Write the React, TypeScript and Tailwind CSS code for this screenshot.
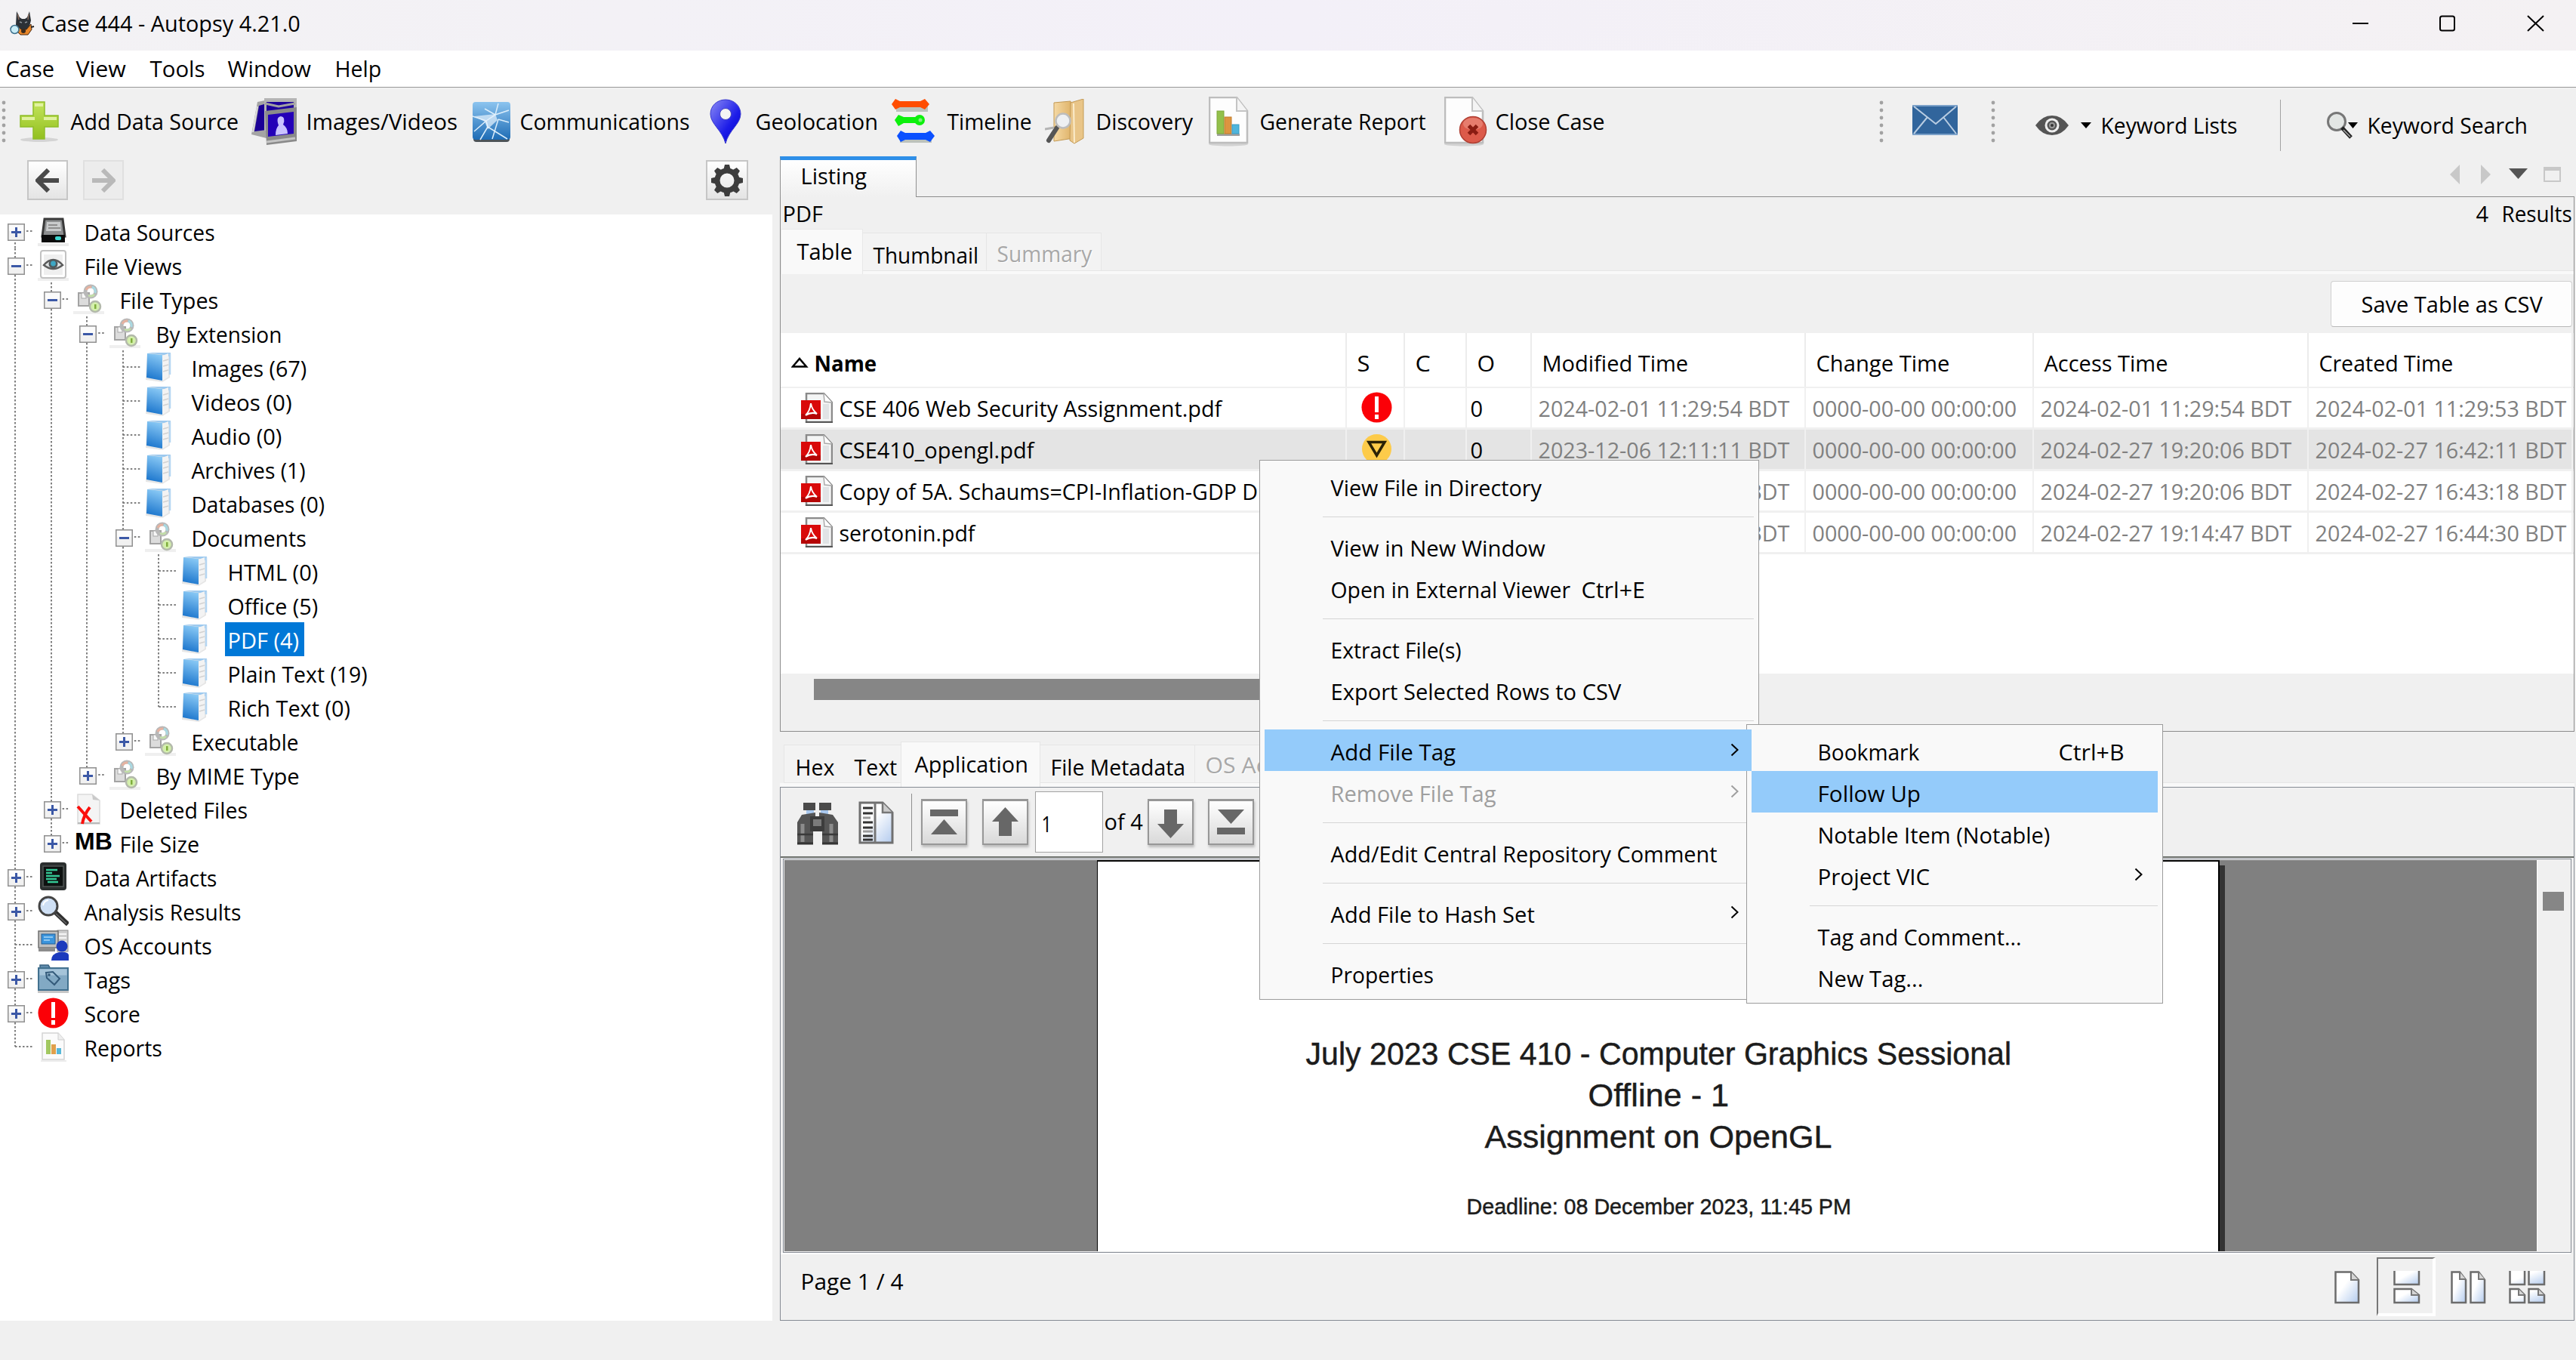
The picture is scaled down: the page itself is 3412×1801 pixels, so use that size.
import { useLayoutEffect, useRef, useState, type ReactNode } from "react";

/* One-line label whose glyphs are fitted horizontally to a fixed ink width. */
function T({ w, children, className = "" }: { w: number; children: ReactNode; className?: string }) {
  const ref = useRef<HTMLSpanElement>(null);
  const [k, setK] = useState(1);
  useLayoutEffect(() => {
    if (ref.current) setK((w + 2) / ref.current.offsetWidth);
  }, [w]);
  return (
    <span className={`block h-10 shrink-0 whitespace-pre leading-10 ${className}`} style={{ width: w }}>
      <span ref={ref} className="inline-block origin-left" style={{ transform: `translateX(-0.5px) scaleX(${k})` }}>
        {children}
      </span>
    </span>
  );
}

/* ---------- toolbar icons ---------- */

function DogIcon() {
  return (
    <svg width="34" height="32" viewBox="0 0 34 32">
      <path d="M9 0 L13 8 L16 10 L20 10 L23 8 L26 0 L28 12 L26 20 L21 25 L13 24 L8 18 Z" fill="#2b3036" />
      <path d="M10.500 4 L12 11 M25 4 L24 11" stroke="#8a6f60" strokeWidth="1.5" />
      <path d="M13 14 L16 15 M20 15 L23 14" stroke="#8d959c" strokeWidth="1.500" />
      <path d="M10 19 L15 24 L22 24 L28 17 L29 24 L24 31 L14 31 L9 26 Z" fill="#e8862a" stroke="#4a2a12" strokeWidth="1" />
      <circle cx="18" cy="26" r="3" fill="#3a2a1c" />
      <circle cx="6.500" cy="24" r="5.500" fill="#c8ecf7" stroke="#3b6f8c" strokeWidth="1.5" />
      <path d="M28 21 L32 20" stroke="#222" strokeWidth="2" />
    </svg>
  );
}

function PlusIcon() {
  return (
    <svg width="52" height="56" viewBox="0 0 52 56">
      <defs>
        <linearGradient id="gPlus" x1="0" y1="0" x2="0" y2="1">
          <stop offset="0" stopColor="#c3e45c" />
          <stop offset="1" stopColor="#93c01f" />
        </linearGradient>
      </defs>
      <ellipse cx="26" cy="52" rx="25" ry="3" fill="#d4d4d4" />
      <path d="M18 2 H33 V20 H51 V35 H33 V51 H18 V35 H1 V20 H18 Z" fill="url(#gPlus)" stroke="#8fbd2a" strokeWidth="1.5" />
      <path d="M20 4 H31 V8 H20 Z M3 22 H20 V26 H3 Z M32 22 H49 V26 H32 Z" fill="#e0f2a0" />
    </svg>
  );
}

function ImagesIcon() {
  return (
    <svg width="62" height="64" viewBox="0 0 62 64">
      <path d="M8 6 L28 2 L34 44 L20 54 L0 49 Z" fill="#a4a4a4" />
      <path d="M10 11 L27 6 L28 42 L4 45 Z" fill="#1b0096" />
      <path d="M8 12 L2 46" stroke="#dcdcdc" strokeWidth="2" />
      <path d="M17 1 H60 V44 H17 Z" fill="#b4b4b4" />
      <path d="M20 6 H56 V40 H20 Z" fill="#1d009c" />
      <path d="M18 8 L36 12 L58 8" fill="none" stroke="#a2a2a2" strokeWidth="3" />
      <path d="M18 18 L60 13 V58 L20 63 Z" fill="#8a8a8a" />
      <path d="M22 23 L56 19 V48 L22 52 Z" fill="#2400b8" />
      <path d="M32 50 Q32 41 36 37 Q32 26 39 25 Q46 26 42 36 Q48 40 48 48 Z" fill="#c9c2ff" />
      <path d="M20 59 L58 54" stroke="#c4c4c4" strokeWidth="3" />
    </svg>
  );
}

function CommIcon() {
  return (
    <svg width="50" height="54" viewBox="0 0 50 54">
      <defs>
        <linearGradient id="gComm" x1="0" y1="0" x2="0" y2="1">
          <stop offset="0" stopColor="#8cc4ef" />
          <stop offset="1" stopColor="#1e6cb5" />
        </linearGradient>
      </defs>
      <rect x="1" y="5" width="48" height="49" rx="4" fill="#4c5358" />
      <rect x="0" y="1" width="50" height="50" rx="4" fill="url(#gComm)" />
      <path d="M0 20 L18 26 L2 40 M18 26 L30 18 L48 12 M18 26 L20 34 L46 50 M20 34 L10 51 M34 3 L30 18 L16 10 M34 24 L26 50 M34 24 L48 28" fill="none" stroke="#dceefb" strokeWidth="1.500" />
      <path d="M2 20 L30 17 L33 25 L20 37 L16 27 Z" fill="#e8f4fd" opacity=".7" />
    </svg>
  );
}

function PinIcon() {
  return (
    <svg width="42" height="60" viewBox="0 0 42 60">
      <defs>
        <linearGradient id="gPin" x1="0" y1="0" x2="1" y2="1">
          <stop offset="0" stopColor="#8b8bf5" />
          <stop offset=".6" stopColor="#1c1ce8" />
          <stop offset="1" stopColor="#0000c8" />
        </linearGradient>
      </defs>
      <path d="M21 1 C32 1 41 9 41 20 C41 33 25 42 21 59 C17 42 1 33 1 20 C1 9 10 1 21 1 Z" fill="url(#gPin)" stroke="#3a3ad0" strokeWidth="1" />
      <circle cx="21" cy="20" r="7.5" fill="#f4f4f4" stroke="#4444c0" strokeWidth="1" />
    </svg>
  );
}

function TimelineIcon() {
  return (
    <svg width="60" height="62" viewBox="0 0 60 62">
      <g fill="#9aa49a" opacity=".6" transform="translate(1 4)">
        <rect x="5" y="5" width="42" height="9" />
        <rect x="10" y="46" width="42" height="9" />
      </g>
      <g fill="#ff4d00">
        <rect x="5" y="4" width="40" height="8" />
        <path d="M0 8 L5 1 L11 4 V12 L5 15 Z M50 8 L44 1 L38 4 V12 L44 15 Z" />
      </g>
      <g fill="#0cf00c">
        <rect x="8" y="25" width="32" height="8" />
        <path d="M4 29 L9 22 L16 25 V33 L9 37 Z" />
        <circle cx="37" cy="29" r="7" />
        <circle cx="38" cy="29" r="2.5" fill="#7df07d" />
      </g>
      <g fill="#0b50ff">
        <rect x="12" y="46" width="40" height="9" />
        <path d="M7 50 L12 43 L18 46 V55 L12 58 Z M57 50 L51 43 L45 46 V55 L51 58 Z" />
      </g>
    </svg>
  );
}

function DiscoveryIcon() {
  return (
    <svg width="52" height="60" viewBox="0 0 52 60">
      <defs>
        <linearGradient id="gFold" x1="0" y1="0" x2="1" y2="0">
          <stop offset="0" stopColor="#f5d9a4" />
          <stop offset="1" stopColor="#dcae62" />
        </linearGradient>
      </defs>
      <path d="M12 5 L34 3 L38 52 L12 56 Z" fill="url(#gFold)" stroke="#c39a55" strokeWidth="1" />
      <path d="M34 5 L51 0 V52 L39 59 L33 55 Z" fill="#e9c588" stroke="#c39a55" strokeWidth="1" />
      <path d="M38 6 L39 58" stroke="#fbeccb" strokeWidth="2" />
      <path d="M16 38 L5 55" stroke="#555" strokeWidth="6" strokeLinecap="round" />
      <path d="M12 38 L0 40" stroke="#b4b4b4" strokeWidth="3" />
      <circle cx="24" cy="29" r="9.500" fill="#eef0f2" stroke="#bdbdbd" strokeWidth="2.5" />
    </svg>
  );
}

function SheetPath() {
  return (
    <>
      <ellipse cx="26" cy="63" rx="26" ry="2.5" fill="#d2d2d2" />
      <path d="M1 1 H37 L51 19 V61 H1 Z" fill="#fdfdfd" stroke="#bdbdbd" strokeWidth="2.5" />
      <path d="M37 1 V19 H51" fill="#f4f4f4" stroke="#c4c4c4" strokeWidth="2" />
    </>
  );
}

function ReportIcon() {
  return (
    <svg width="54" height="66" viewBox="0 0 54 66">
      <SheetPath />
      <rect x="11" y="49" width="30" height="3" fill="#a0a0a0" />
      <rect x="11" y="19" width="9" height="30" fill="#93c04a" stroke="#7fa93a" />
      <rect x="21" y="27" width="9" height="22" fill="#dd9440" stroke="#c27c28" />
      <rect x="31" y="37" width="9" height="12" fill="#4fb5dc" stroke="#3a9cc4" />
    </svg>
  );
}

function CloseCaseIcon() {
  return (
    <svg width="58" height="66" viewBox="0 0 58 66">
      <SheetPath />
      <circle cx="38" cy="44" r="17.5" fill="#dc5a4a" stroke="#b04034" strokeWidth="1.5" />
      <ellipse cx="38" cy="36" rx="13" ry="8" fill="#ea8a7c" opacity=".7" />
      <path d="M32.5 38.5 L43.5 49.5 M43.5 38.5 L32.5 49.5" stroke="#8a1c12" strokeWidth="5" />
    </svg>
  );
}

function MailIcon() {
  return (
    <svg width="60" height="40" viewBox="0 0 60 40">
      <rect width="60" height="40" fill="#31659c" />
      <rect width="60" height="2" fill="#7ba0c8" />
      <rect y="38" width="60" height="2" fill="#7ba0c8" />
      <path d="M2 2 L31 25 L58 2 M2 38 L20 16 M58 38 L41 16" fill="none" stroke="#b9cde2" strokeWidth="2" />
    </svg>
  );
}

function EyeIcon() {
  return (
    <svg width="46" height="26" viewBox="0 0 46 26">
      <path d="M0 13 Q9 0 22 0 Q35 0 44 13 Q35 26 22 26 Q9 26 0 13 Z" fill="#555" />
      <circle cx="22" cy="13" r="9.500" fill="#efefef" />
      <circle cx="22" cy="13" r="6.500" fill="#555" />
      <circle cx="22" cy="13" r="4" fill="#9a9a9a" />
      <circle cx="22" cy="13" r="2" fill="#333" />
    </svg>
  );
}

function SmallCaret() {
  return (
    <svg width="14" height="8" viewBox="0 0 14 8">
      <path d="M0 0 H14 L7 8 Z" fill="#000" />
    </svg>
  );
}

function KeywordSearchIcon() {
  return (
    <svg width="42" height="38" viewBox="0 0 42 38">
      <circle cx="13" cy="14" r="11.5" fill="#e3e6e4" stroke="#777" strokeWidth="3" />
      <path d="M20 22 L32 35" stroke="#222" strokeWidth="5" />
      <path d="M22 25 L31 34" stroke="#aaa" strokeWidth="1.5" />
      <path d="M28 15 H41 L34.500 23 Z" fill="#000" />
    </svg>
  );
}

function Grip() {
  return (
    <svg width="6" height="56" viewBox="0 0 6 56">
      {[0, 1, 2, 3, 4, 5].map((i) => (
        <circle key={i} cx="3" cy={3 + i * 10} r="2.4" fill="#a2a2a2" />
      ))}
    </svg>
  );
}

/* ---------- tree icons (41 x 41) ---------- */

type IconName =
  | "disk" | "eye" | "types" | "folder" | "deleted" | "mb" | "artifacts"
  | "magnifier" | "accounts" | "tags" | "score" | "reports";

function ScoreGlyph() {
  return (
    <>
      <circle cx="20.500" cy="20.500" r="20" fill="#fb0007" />
      <path d="M20.500 6 V27 M20.500 30 V36" stroke="#fff" strokeWidth="5" />
    </>
  );
}

function TreeIcon({ name }: { name: IconName }) {
  if (name === "mb") {
    return <span className="block h-[41px] w-[52px] pl-[2px] font-['Liberation_Sans'] text-[32px] font-bold leading-[36px]">MB</span>;
  }
  return (
    <svg width="41" height="41" viewBox="0 0 41 41">
      {name === "disk" && (
        <>
          <rect x="0" y="36" width="41" height="4" fill="#ececec" />
          <path d="M9 4 H33 L36 27 H6 Z" fill="#8d8f90" stroke="#3a3a3a" strokeWidth="3" />
          <path d="M12 8 H30 L31 20 H11 Z" fill="#c9cbcc" />
          <path d="M14 12 H26 M14 16 H30" stroke="#8e8e8e" strokeWidth="2" />
          <rect x="5" y="25" width="31" height="10" fill="#0b0b0b" />
          <rect x="23" y="27" width="8" height="5" rx="2" fill="#3fd6d0" />
        </>
      )}
      {name === "eye" && (
        <>
          <rect x="0" y="37" width="41" height="4" fill="#efefef" />
          <rect x="4" y="1" width="33" height="36" rx="3" fill="#fff" stroke="#c2c2c2" strokeWidth="2" />
          <rect x="8" y="6" width="25" height="27" fill="#efefef" />
          <path d="M8 20 Q20.500 6 33 20 Q20.500 30 8 20 Z" fill="#dfe3e4" stroke="#5c5c5c" strokeWidth="2.5" />
          <circle cx="20.500" cy="18.500" r="6" fill="#50595c" />
          <circle cx="20.500" cy="18" r="3.4" fill="#3da7c4" />
        </>
      )}
      {name === "types" && (
        <>
          <rect x="0" y="36" width="41" height="4" fill="#efefef" />
          <rect x="7" y="12" width="14" height="17" fill="#dcdcdc" stroke="#a3a3a3" strokeWidth="2" />
          <rect x="11" y="12" width="6" height="7" fill="#f8f8f8" stroke="#a8a8a8" />
          <circle cx="23" cy="10" r="7" fill="none" stroke="#b8b8b8" strokeWidth="5" />
          <path d="M17 8 A6.500 6.500 0 0 1 24 4" fill="none" stroke="#e6b2a0" strokeWidth="3" />
          <path d="M25 4 A6.500 6.500 0 0 1 29 12" fill="none" stroke="#a9d9e2" strokeWidth="3" />
          <path d="M28 14 A6.500 6.500 0 0 1 20 15" fill="none" stroke="#c2dfa8" strokeWidth="2.500" />
          <circle cx="29" cy="30" r="7" fill="#d3efab" stroke="#b3b9ab" strokeWidth="2.5" />
          <rect x="28" y="27" width="2.500" height="6" fill="#7fae3c" />
        </>
      )}
      {name === "folder" && (
        <>
          <path d="M3 2 L34 1 L33 34 L23 40 L1 37 Z" fill="#e6e6e6" />
          <path d="M3 1 L34 1 L32 6 L24 4 Z" fill="#9cc9ef" />
          <path d="M23 5 L31 2 V33 L22 39 Z" fill="#f3f3f3" />
          <path d="M24 12 L31 10 M24 19 L31 17 M24 26 L31 24" stroke="#d2d2d2" strokeWidth="1.500" />
          <path d="M33 2 V30" stroke="#b5d6f2" strokeWidth="2.500" />
          <linearGradient id="gFolder" x1="0.700" y1="0" x2="0.500" y2="1">
            <stop offset="0" stopColor="#8ccbf6" />
            <stop offset="1" stopColor="#1c76cd" />
          </linearGradient>
          <path d="M3 2 L23 4 V38 L2 34 Z" fill="url(#gFolder)" />
        </>
      )}
      {name === "deleted" && (
        <>
          <path d="M6 1 H25 L35 9 V40 H6 Z" fill="#f4f4f4" stroke="#dadada" strokeWidth="1.500" />
          <path d="M25 1 L26 8 L35 9 Z" fill="#c9c9c9" />
          <rect x="6" y="38" width="29" height="2" fill="#b9b9b9" />
          <path d="M6 17 Q14 26 24 37" fill="none" stroke="#fb0f0c" strokeWidth="4" />
          <path d="M22 18 Q14 28 12 40" fill="none" stroke="#fb0f0c" strokeWidth="4" />
        </>
      )}
      {name === "artifacts" && (
        <>
          <rect x="3" y="1" width="35" height="37" rx="4" fill="#2b2f2f" />
          <rect x="7" y="6" width="27" height="27" fill="#0d1110" stroke="#505654" strokeWidth="1.500" />
          <path d="M11 11 H26 M11 15 H19 M11 19 H29 M11 23 H25 M13 27 H27" stroke="#34c794" strokeWidth="2.500" />
        </>
      )}
      {name === "magnifier" && (
        <>
          <path d="M22 21 L40 38" stroke="#2f2f2f" strokeWidth="6" />
          <path d="M24 24 L38 37" stroke="#6a6a6a" strokeWidth="1.500" />
          <circle cx="14" cy="14" r="12" fill="#cfe0f5" stroke="#444" strokeWidth="3" />
          <path d="M7 13 Q8 7 14 6" fill="none" stroke="#fff" strokeWidth="2" />
        </>
      )}
      {name === "accounts" && (
        <>
          <rect x="26" y="1" width="14" height="28" fill="#cfcfcf" stroke="#8e8e8e" />
          <path d="M28 6 H38 M28 11 H38 M28 16 H38" stroke="#f6f6f6" strokeWidth="2" />
          <rect x="1" y="2" width="26" height="22" fill="#c0c0c0" stroke="#6f6f6f" strokeWidth="1.500" />
          <rect x="5" y="6" width="18" height="13" fill="#3b95dd" stroke="#245f96" />
          <path d="M8 10 H20 M8 14 H16" stroke="#8dc7f2" strokeWidth="2" />
          <rect x="1" y="25" width="22" height="4" fill="#8c8c8c" />
          <circle cx="32" cy="22" r="7.500" fill="#1c3bbd" />
          <path d="M18 41 Q18 32 28 30 H36 Q41 31 41 34 V41 Z" fill="#1c3bbd" />
        </>
      )}
      {name === "tags" && (
        <>
          <rect x="0" y="36" width="41" height="3" fill="#c6c6c6" />
          <path d="M3 7 V2 H14 L17 7 Z" fill="#5f8bac" stroke="#3b6483" strokeWidth="1.500" />
          <rect x="1" y="6" width="39" height="29" fill="#82a9c4" stroke="#42718f" strokeWidth="2" />
          <rect x="2.500" y="7.500" width="36" height="8" fill="#a5c4d9" />
          <path d="M11 12 L20 11 L29 20 L22 28 L12 19 Z" fill="none" stroke="#335a7a" strokeWidth="2" />
          <circle cx="15" cy="15" r="1.800" fill="#335a7a" />
        </>
      )}
      {name === "score" && <ScoreGlyph />}
      {name === "reports" && (
        <>
          <rect x="4" y="38" width="34" height="2" fill="#ececec" />
          <path d="M6 2 H27 L35 11 V37 H6 Z" fill="#fbfbfb" stroke="#d4d4d4" strokeWidth="1.500" />
          <path d="M27 2 V11 H35" fill="#eee" stroke="#cfcfcf" />
          <rect x="11" y="11" width="6" height="19" fill="#a2c861" />
          <rect x="18" y="17" width="6" height="13" fill="#e0a04b" />
          <rect x="25" y="22" width="6" height="8" fill="#57b8d8" />
        </>
      )}
    </svg>
  );
}

/* ---------- file tree ---------- */

type Node = { label: string; w: number; level: number; icon: IconName; box?: "+" | "-"; selected?: boolean };

const nodes: Node[] = [
  { label: "Data Sources", w: 171, level: 0, icon: "disk", box: "+" },
  { label: "File Views", w: 128, level: 0, icon: "eye", box: "-" },
  { label: "File Types", w: 129, level: 1, icon: "types", box: "-" },
  { label: "By Extension", w: 165, level: 2, icon: "types", box: "-" },
  { label: "Images (67)", w: 151, level: 3, icon: "folder" },
  { label: "Videos (0)", w: 131, level: 3, icon: "folder" },
  { label: "Audio (0)", w: 118, level: 3, icon: "folder" },
  { label: "Archives (1)", w: 149, level: 3, icon: "folder" },
  { label: "Databases (0)", w: 175, level: 3, icon: "folder" },
  { label: "Documents", w: 150, level: 3, icon: "types", box: "-" },
  { label: "HTML (0)", w: 118, level: 4, icon: "folder" },
  { label: "Office (5)", w: 118, level: 4, icon: "folder" },
  { label: "PDF (4)", w: 93, level: 4, icon: "folder", selected: true },
  { label: "Plain Text (19)", w: 183, level: 4, icon: "folder" },
  { label: "Rich Text (0)", w: 160, level: 4, icon: "folder" },
  { label: "Executable", w: 140, level: 3, icon: "types", box: "+" },
  { label: "By MIME Type", w: 188, level: 2, icon: "types", box: "+" },
  { label: "Deleted Files", w: 168, level: 1, icon: "deleted", box: "+" },
  { label: "File Size", w: 104, level: 1, icon: "mb", box: "+" },
  { label: "Data Artifacts", w: 174, level: 0, icon: "artifacts", box: "+" },
  { label: "Analysis Results", w: 206, level: 0, icon: "magnifier", box: "+" },
  { label: "OS Accounts", w: 167, level: 0, icon: "accounts" },
  { label: "Tags", w: 60, level: 0, icon: "tags", box: "+" },
  { label: "Score", w: 72, level: 0, icon: "score", box: "+" },
  { label: "Reports", w: 101, level: 0, icon: "reports" },
];

/* first and last row that each guide line touches */
const guides = [
  [0, 24],
  [2, 18],
  [3, 16],
  [4, 15],
  [10, 14],
];

const guttersByLevel = ["w-[50px]", "w-[97px]", "w-[145px]", "w-[192px]", "w-[240px]"];

function TreeRow({ node, row }: { node: Node; row: number }) {
  const x = 20 + node.level * 47.6;
  return (
    <div className="flex h-[45px] items-center">
      <div className={`h-[45px] shrink-0 ${guttersByLevel[node.level]}`}>
        <svg width="100%" height="45">
          {guides.map(([a, b], c) => {
            if (row < a || row > b) return null;
            const gx = Math.round(20 + c * 47.6);
            return (
              <line key={c} x1={gx} x2={gx} y1={row === 0 ? 22 : 0} y2={row === b ? 22 : 45}
                stroke="#808080" strokeWidth="2" strokeDasharray="2.500 2.500" />
            );
          })}
          <line x1={x} x2={x + 25} y1="22" y2="22" stroke="#808080" strokeWidth="2" strokeDasharray="2.500 2.500" />
          {node.box && (
            <g transform={`translate(${Math.round(x) - 10} 12)`}>
              <rect x=".75" y=".75" width="21.500" height="21.500" fill="#f1f1f1" stroke="#919191" strokeWidth="1.500" />
              <rect x="2" y="2" width="19" height="8" fill="#fbfbfb" />
              <path d={node.box === "+" ? "M5 11.500 H18 M11.500 5 V18" : "M5 11.500 H18"} stroke="#3b58a6" strokeWidth="3" />
            </g>
          )}
        </svg>
      </div>
      <div className="w-[58px] shrink-0">
        <TreeIcon name={node.icon} />
      </div>
      <div className={node.selected ? "flex h-[45px] w-[105px] items-center bg-[#0078d7] pl-1 pt-0.5 text-white" : "flex h-[45px] items-center pl-1 pt-0.5"}>
        <T w={node.w}>{node.label}</T>
      </div>
    </div>
  );
}

/* ---------- results table ---------- */

const cols = "grid grid-cols-[750px_77px_82px_86px_363px_302px_364px_350px]";

const files = [
  { name: "CSE 406 Web Security Assignment.pdf", w: 505, score: "red", o: "0", m: "2024-02-01 11:29:54 BDT", a: "2024-02-01 11:29:54 BDT", c: "2024-02-01 11:29:53 BDT" },
  { name: "CSE410_opengl.pdf", w: 256, score: "yellow", o: "0", m: "2023-12-06 12:11:11 BDT", a: "2024-02-27 19:20:06 BDT", c: "2024-02-27 16:42:11 BDT" },
  { name: "Copy of 5A. Schaums=CPI-Inflation-GDP D", w: 553, score: "", o: "", m: "2024-02-27 19:20:06 BDT", a: "2024-02-27 19:20:06 BDT", c: "2024-02-27 16:43:18 BDT" },
  { name: "serotonin.pdf", w: 178, score: "", o: "", m: "2024-02-27 19:14:47 BDT", a: "2024-02-27 19:14:47 BDT", c: "2024-02-27 16:44:30 BDT" },
];

function PdfIcon() {
  return (
    <svg width="42" height="40" viewBox="0 0 42 40">
      <path d="M7 1 H30 L41 13 V39 H7 Z" fill="#f4f5f5" stroke="#8a8a8a" strokeWidth="2.500" />
      <path d="M30 1 L31 12 L41 13" fill="#fff" stroke="#aaa" strokeWidth="1.500" />
      <rect x="29" y="15" width="8" height="20" fill="#e1e4e6" />
      <path d="M6 39 H42" stroke="#555" strokeWidth="2" />
      <rect x="0" y="10" width="26" height="25" fill="#d90a0a" />
      <rect x="0" y="28" width="26" height="7" fill="#b50505" />
      <path d="M13 14 Q14 22 21 28 Q14 25 6 30 Q12 24 13 14 Z" fill="none" stroke="#fff" strokeWidth="2" />
    </svg>
  );
}

function ScoreIcon({ kind }: { kind: string }) {
  if (kind === "red") {
    return <svg width="41" height="41"><ScoreGlyph /></svg>;
  }
  if (kind === "yellow") {
    return (
      <svg width="41" height="41" viewBox="0 0 41 41">
        <circle cx="20.500" cy="20.500" r="19.500" fill="#fdcb4a" />
        <path d="M10 11.500 H31 L20.500 29 Z" fill="none" stroke="#2a2206" strokeWidth="3.500" />
      </svg>
    );
  }
  return null;
}

function ResultsTable() {
  return (
    <div className="h-[451px] bg-white">
      <div className={`${cols} h-[73px] border-b-2 border-[#f0f0f0] [&>div]:flex [&>div]:h-[71px] [&>div]:items-center [&>div]:border-r-2 [&>div]:border-[#ececec] [&>div]:pl-[14px] [&>div]:pt-[9px]`}>
        <div>
          <svg className="-mt-[3px]" width="31" height="14" viewBox="0 0 31 14">
            <path d="M2 12.500 L11 2 L20 12.500 Z" fill="none" stroke="#000" strokeWidth="2.500" />
          </svg>
          <T w={81} className="font-bold">Name</T>
        </div>
        <div><T w={15}>S</T></div>
        <div><T w={18}>C</T></div>
        <div><T w={22}>O</T></div>
        <div><T w={192}>Modified Time</T></div>
        <div><T w={175}>Change Time</T></div>
        <div><T w={162}>Access Time</T></div>
        <div><T w={176}>Created Time</T></div>
      </div>
      {files.map((f, i) => (
        <div key={f.name}
          className={`${cols} h-[55px] border-b-[3px] border-[#f0f0f0] text-[#808080] [&>div]:flex [&>div]:items-center [&>div]:border-r-2 [&>div]:border-[#f0f0f0] [&>div]:pl-[9px] [&>div]:pt-[2px] ${i === 1 ? "bg-[#e4e4e4]" : "bg-white"}`}>
          <div className="text-black">
            <div className="ml-[18px] w-[51px] shrink-0 pb-[2px]"><PdfIcon /></div>
            <T w={f.w}>{f.name}</T>
          </div>
          <div><div className="ml-[10px] pb-1"><ScoreIcon kind={f.score} /></div></div>
          <div />
          <div className="text-black"><div className="-ml-1">{f.o && <T w={15}>{f.o}</T>}</div></div>
          <div><T w={331}>{f.m}</T></div>
          <div><T w={269}>0000-00-00 00:00:00</T></div>
          <div><T w={331}>{f.a}</T></div>
          <div><T w={331}>{f.c}</T></div>
        </div>
      ))}
    </div>
  );
}

/* ---------- document viewer pieces ---------- */

function BinocularsIcon() {
  return (
    <svg width="62" height="60" viewBox="0 0 62 60">
      <path d="M11 2 H27 V12 H11 Z M32 2 H48 V12 H32 Z" fill="#4a4a4a" />
      <path d="M15 12 H25 V18 H15 Z M34 12 H44 V18 H34 Z" fill="#a9c8ee" />
      <path d="M9 18 L27 15 V56 H3 V28 Z M50 18 L32 15 V56 H57 V28 Z" fill="#555" />
      <rect x="20" y="20" width="19" height="20" fill="#3c3c3c" />
      <rect x="24" y="24" width="11" height="9" fill="#7a7a7a" />
      <path d="M10 30 V54 M48 30 V54" stroke="#8c8c8c" strokeWidth="5" />
      <path d="M3 44 H24 M36 44 H57" stroke="#3a3a3a" strokeWidth="2.500" />
      <path d="M3 56 H24 M36 56 H57" stroke="#333" strokeWidth="3" />
      <path d="M24 40 H36 V58 H24 Z" fill="#f0f0f0" />
    </svg>
  );
}

function OutlineIcon() {
  return (
    <svg width="50" height="60" viewBox="0 0 50 60">
      <defs>
        <linearGradient id="gPg" x1="0" y1="0" x2="1" y2="1">
          <stop offset=".4" stopColor="#fff" />
          <stop offset="1" stopColor="#b3cbee" />
        </linearGradient>
      </defs>
      <path d="M2 2 H32 L45 15 V55 H2 Z" fill="url(#gPg)" stroke="#707070" strokeWidth="3" />
      <path d="M32 2 V15 H45" fill="#ccc" stroke="#777" strokeWidth="2.500" />
      <path d="M22 2 V55" stroke="#777" strokeWidth="3" />
      <path d="M6 9 H19 M6 16 H19 M6 28 H19 M6 35 H19 M6 46 H19 M6 51 H19" stroke="#333" strokeWidth="3" />
      <path d="M6 22 H16 M6 40 H19" stroke="#9a9a9a" strokeWidth="3" />
    </svg>
  );
}

function PagerButton({ d }: { d: string }) {
  return (
    <div className="flex h-[61px] w-[61px] items-center justify-center border-2 border-t-[3px] border-[#979797] bg-gradient-to-b from-white to-[#d9d9d9] shadow-[1px_3px_3px_#bdbdbd]">
      <svg width="41" height="41" viewBox="0 0 41 41"><path d={d} fill="#676767" /></svg>
    </div>
  );
}

function ViewIcon({ kind }: { kind: "single" | "continuous" | "facing" | "facingContinuous" }) {
  const s = { stroke: "#6c6c6c", strokeWidth: 2.5, fill: "url(#gPg)" };
  const f = { stroke: "#777", strokeWidth: 2, fill: "#d5d5d5" };
  return (
    <svg width="52" height="46" viewBox="0 0 52 46">
      {kind === "single" && (
        <>
          <path d="M1.500 1.500 H22 L32 12 V42 H1.500 Z" {...s} />
          <path d="M22 1.500 V12 H32" {...f} />
        </>
      )}
      {kind === "continuous" && (
        <>
          <path d="M1.500 0 V18 H34 V0" {...s} />
          <path d="M34 36 V32 L24 24 H1.500 V42 H34 V36" {...s} />
          <path d="M24 24 V32 H34" {...f} />
        </>
      )}
      {kind === "facing" && (
        <>
          <path d="M1.500 1.500 H12 L20 12 V42 H1.500 Z" {...s} />
          <path d="M12 1.500 V11 H20" {...f} />
          <path d="M26.500 1.500 H37 L45 12 V42 H26.500 Z" {...s} />
          <path d="M37 1.500 V11 H45" {...f} />
        </>
      )}
      {kind === "facingContinuous" && (
        <>
          <path d="M1.500 0 V18 H21 V0 M26.500 0 V18 H47 V0" {...s} />
          <path d="M21 42 V32 L13 24 H1.500 V42 Z M47 42 V32 L39 24 H26.500 V42 Z" {...s} />
          <path d="M13 24 V32 H21 M39 24 V32 H47" {...f} />
        </>
      )}
    </svg>
  );
}

/* ---------- context menus ---------- */

function Chevron() {
  return (
    <svg width="12" height="18" viewBox="0 0 12 18">
      <path d="M1.500 1.500 L9.500 9 L1.500 16.500" fill="none" stroke="currentColor" strokeWidth="2" />
    </svg>
  );
}

type Item = { label: string; w: number; keys?: string; kw?: number; sub?: boolean; on?: boolean; off?: boolean } | null;

const mainMenu: Item[] = [
  { label: "View File in Directory", w: 278 },
  null,
  { label: "View in New Window", w: 282 },
  { label: "Open in External Viewer", w: 316, keys: "Ctrl+E", kw: 82 },
  null,
  { label: "Extract File(s)", w: 171 },
  { label: "Export Selected Rows to CSV", w: 383 },
  null,
  { label: "Add File Tag", w: 164, sub: true, on: true },
  { label: "Remove File Tag", w: 217, sub: true, off: true },
  null,
  { label: "Add/Edit Central Repository Comment", w: 510 },
  null,
  { label: "Add File to Hash Set", w: 268, sub: true },
  null,
  { label: "Properties", w: 134 },
];

const tagMenu: Item[] = [
  { label: "Bookmark", w: 133, keys: "Ctrl+B", kw: 85 },
  { label: "Follow Up", w: 134, on: true },
  { label: "Notable Item (Notable)", w: 306 },
  { label: "Project VIC", w: 147, sub: true },
  null,
  { label: "Tag and Comment...", w: 268 },
  { label: "New Tag...", w: 138 },
];

function MenuList({ items, wide }: { items: Item[]; wide?: boolean }) {
  return (
    <>
      {items.map((it, i) =>
        it === null ? (
          <div key={i} className="flex h-[25px] items-center pl-[77px] pt-[2px]">
            <div className="h-px w-full bg-[#d5d5d5]" />
          </div>
        ) : (
          <div key={i}
            className={`flex h-[55px] items-center pl-[88px] ${it.on ? "bg-[#94cbfa]" : ""} ${it.off ? "text-[#9f9f9f]" : "text-black"}`}>
            <div className="pt-[5px]"><T w={it.w}>{it.label}</T></div>
            {it.keys && <div className={wide ? "ml-auto mr-[46px] pt-[5px]" : "ml-4 pt-[5px]"}><T w={it.kw ?? 80}>{it.keys}</T></div>}
            {it.sub && <div className="ml-auto mr-[19px] pb-[2px]"><Chevron /></div>}
          </div>
        )
      )}
    </>
  );
}

/* ---------- window ---------- */

const tools = [
  { label: "Add Data Source", w: 221, icon: <PlusIcon />, box: "w-[307px]", ib: "w-[68px]" },
  { label: "Images/Videos", w: 198, icon: <ImagesIcon />, box: "w-[293px]", ib: "w-[73px]" },
  { label: "Communications", w: 223, icon: <CommIcon />, box: "w-[314px]", ib: "w-[63px]" },
  { label: "Geolocation", w: 160, icon: <PinIcon />, box: "w-[241px]", ib: "w-[61px]" },
  { label: "Timeline", w: 110, icon: <TimelineIcon />, box: "w-[203px]", ib: "w-[74px]" },
  { label: "Discovery", w: 127, icon: <DiscoveryIcon />, box: "w-[217px]", ib: "w-[68px]" },
  { label: "Generate Report", w: 218, icon: <ReportIcon />, box: "w-[312px]", ib: "w-[68px]" },
  { label: "Close Case", w: 143, icon: <CloseCaseIcon />, box: "w-[211px]", ib: "w-[68px]" },
];

export default function App() {
  return (
    <div className="relative flex h-[1801px] w-[3412px] flex-col overflow-hidden bg-[#f0f0f0] font-['Open_Sans',sans-serif] text-[29px] text-black">
      {/* title bar */}
      <div className="flex h-[67px] shrink-0 items-center bg-gradient-to-r from-[#f3f2f4] via-[#f3f0f8] to-[#f4f1f3] pb-[6px] pl-[13px]">
        <div className="w-[42px]"><DogIcon /></div>
        <T w={341}>Case 444 - Autopsy 4.21.0</T>
        <svg className="ml-auto mr-[42px]" width="255" height="22" viewBox="0 0 255 22">
          <path d="M1 11 H22" stroke="#000" strokeWidth="2" />
          <rect x="117" y="1.500" width="19" height="19" rx="2.500" fill="none" stroke="#000" strokeWidth="2" />
          <path d="M233 1 L254 21 M254 1 L233 21" stroke="#000" strokeWidth="2" />
        </svg>
      </div>

      {/* menu bar */}
      <div className="flex h-[49px] shrink-0 items-center border-b-[1.5px] border-[#989898] bg-white pl-2">
        <div className="w-[93px]"><T w={63}>Case</T></div>
        <div className="w-[98px]"><T w={64}>View</T></div>
        <div className="w-[103px]"><T w={71}>Tools</T></div>
        <div className="w-[142px]"><T w={109}>Window</T></div>
        <T w={60}>Help</T>
      </div>

      {/* toolbar */}
      <div className="flex h-[90px] shrink-0 items-center pl-[2px]">
        <div className="w-[24px]"><Grip /></div>
        {tools.map((t) => (
          <div key={t.label} className={`flex shrink-0 items-center ${t.box}`}>
            <div className={`shrink-0 ${t.ib}`}>{t.icon}</div>
            <T w={t.w}>{t.label}</T>
          </div>
        ))}
        <div className="ml-[365px] w-[44px]"><Grip /></div>
        <div className="w-[104px] pb-1"><MailIcon /></div>
        <div className="w-[59px]"><Grip /></div>
        <div className="flex items-center pt-[9px]">
          <div className="w-[60px]"><EyeIcon /></div>
          <div className="w-[27px]"><SmallCaret /></div>
          <T w={179}>Keyword Lists</T>
          <div className="ml-[58px] h-[68px] w-px bg-[#a2a2a2]" />
          <div className="ml-[61px] w-[54px]"><KeywordSearchIcon /></div>
          <T w={210}>Keyword Search</T>
        </div>
      </div>

      <div className="flex h-[1543px] shrink-0">
        {/* navigator */}
        <div className="flex w-[1023px] shrink-0 flex-col">
          <div className="flex h-[78px] items-start pl-9 pt-[6px]">
            <div className="flex h-[53px] w-[54px] items-center justify-center border-2 border-[#c6c6c6] bg-gradient-to-b from-white to-[#e4e4e4]">
              <svg width="32" height="32" viewBox="0 0 32 32"><path d="M17 2 L3 16 L17 30 M4 16 H31" fill="none" stroke="#4a4a4a" strokeWidth="6" /></svg>
            </div>
            <div className="ml-5 flex h-[53px] w-[54px] items-center justify-center border-2 border-[#e0e0e0] bg-[#ececec]">
              <svg width="32" height="32" viewBox="0 0 32 32"><path d="M15 2 L29 16 L15 30 M28 16 H1" fill="none" stroke="#b9b9b9" strokeWidth="6" /></svg>
            </div>
            <div className="ml-auto mr-[32px] flex h-[53px] w-[56px] items-center justify-center border-2 border-[#c6c6c6] bg-gradient-to-b from-white to-[#e4e4e4]">
              <svg width="44" height="44" viewBox="0 0 44 44">
                <circle cx="22" cy="22" r="13" fill="none" stroke="#3d3d3d" strokeWidth="7" />
                {[0, 45, 90, 135, 180, 225, 270, 315].map((a) => (
                  <path key={a} d="M17 9 L19 1 H25 L27 9 Z" fill="#3d3d3d" transform={`rotate(${a} 22 22)`} />
                ))}
              </svg>
            </div>
          </div>
          <div className="flex-1 bg-white">
            {nodes.map((n, i) => (
              <TreeRow key={n.label} node={n} row={i} />
            ))}
          </div>
        </div>

        <div className="flex w-[2387px] shrink-0 flex-col pl-[10px]">
          {/* listing tab strip */}
          <div className="flex h-[55px] shrink-0">
            <div className="mt-px w-[181px] border-x border-t-[5px] border-x-[#909090] border-t-[#2e8fe8] bg-gradient-to-b from-white to-[#f0f0f0] pl-[27px] pt-px">
              <T w={85}>Listing</T>
            </div>
            <div className="flex flex-1 items-center border-b border-[#8c8c8c] pb-[5px] pl-[2031px]">
              <svg width="150" height="26" viewBox="0 0 150 26">
                <path d="M13 0 V26 L0 13 Z M41 0 V26 L54 13 Z" fill="#c8c8c8" />
                <path d="M78 5 H103 L90.500 19 Z" fill="#555" />
                <path d="M124 3 H147 V23 H124 Z M126 8 V21 H145 V8 Z" fill="#c8c8c8" fillRule="evenodd" />
              </svg>
            </div>
          </div>

          {/* listing panel */}
          <div className="h-[708px] w-[2377px] shrink-0 border-x border-b border-[#8c8c8c]">
            <div className="flex h-[42px] items-center pl-[3px] pr-[4px] pt-[2px]">
              <T w={51}>PDF</T>
              <div className="ml-auto w-[34px]"><T w={15}>4</T></div>
              <T w={91}>Results</T>
            </div>
            <div className="flex h-[60px] items-end border-b-4 border-[#f9f9f9]">
              <div className="-mb-1 flex h-[60px] w-[109px] items-center border border-b-0 border-[#e8e8e8] bg-[#f9f9f9] pb-[2px] pl-[21px]"><T w={71}>Table</T></div>
              <div className="flex h-[51px] w-[164px] items-center border border-l-0 border-[#e6e6e6] bg-[#f3f3f3] pl-[14px] pt-[8px]"><T w={138}>Thumbnail</T></div>
              <div className="flex h-[51px] w-[152px] items-center border border-l-0 border-[#e6e6e6] bg-[#f3f3f3] pl-[14px] pt-[5px] text-[#a8a8a8] [text-shadow:1px_1px_#fff]"><T w={124}>Summary</T></div>
              <div className="h-px flex-1 bg-[#e6e6e6]" />
            </div>
            <div className="flex h-[78px] justify-end pr-[2px] pt-[9px]">
              <div className="flex h-[61px] w-[320px] items-center justify-center rounded border border-[#cfcfcf] border-b-[#b8b8b8] bg-[#fdfdfd]"><T w={238}>Save Table as CSV</T></div>
            </div>
            <ResultsTable />
            <div className="pl-[44px] pt-[7px]">
              <div className="h-[28px] w-[1180px] bg-[#868686]" />
            </div>
          </div>

          {/* content viewer tabs */}
          <div className="mt-[13px] flex h-[60px] shrink-0 items-end border-b-[5px] border-[#f9f9f9]">
            <div className="ml-[5px] flex h-[51px] w-[155px] items-center border border-r-0 border-[#e6e6e6] bg-[#f3f3f3] pl-[15px] pt-[9px]">
              <div className="w-[78px]"><T w={50}>Hex</T></div>
              <T w={55}>Text</T>
            </div>
            <div className="-mb-[5px] flex h-[60px] w-[185px] items-center border border-b-0 border-[#e6e6e6] bg-[#f9f9f9] pb-[2px] pl-[18px]"><T w={148}>Application</T></div>
            <div className="flex h-[51px] w-[205px] items-center border border-l-0 border-[#e6e6e6] bg-[#f3f3f3] pl-[14px] pt-[9px]"><T w={177}>File Metadata</T></div>
            <div className="flex h-[51px] w-[180px] items-center border border-l-0 border-[#e6e6e6] bg-[#f3f3f3] pl-[14px] pt-[2px] text-[#a8a8a8] [text-shadow:1px_1px_#fff]"><T w={160}>OS Account</T></div>
            <div className="h-px flex-1 bg-[#e6e6e6]" />
          </div>

          {/* document viewer */}
          <div className="flex h-[707px] w-[2377px] shrink-0 flex-col border border-[#868b94]">
            <div className="flex h-[93px] shrink-0 items-center border-b-2 border-[#6b6f6b] pl-[19px]">
              <div className="w-[84px] pt-1"><BinocularsIcon /></div>
              <div className="w-[70px] pt-1"><OutlineIcon /></div>
              <div className="h-[76px] w-px bg-[#8f8f8f]" />
              <div className="ml-[12px] flex">
                <PagerButton d="M2 3 H39 V12 H2 Z M20.500 16 L38 36 H3 Z" />
                <div className="w-[20px]" />
                <PagerButton d="M20.500 0 L38 19 H29 V38 H12 V19 H3 Z" />
              </div>
              <div className="ml-[9px] flex h-[81px] w-[90px] items-center border border-[#a2a2a2] bg-white pl-[8px] pt-[4px]"><T w={12}>1</T></div>
              <div className="ml-[2px] w-[57px] pb-[2px]"><T w={49}>of 4</T></div>
              <div className="flex">
                <PagerButton d="M20.500 41 L38 22 H29 V3 H12 V22 H3 Z" />
                <div className="w-[19px]" />
                <PagerButton d="M3 3 H38 L20.500 22 Z M2 27 H39 V36 H2 Z" />
              </div>
            </div>
            <div className="ml-[3px] mt-px flex h-[522px] w-[2369px] shrink-0 border border-[#868b94] bg-[#f0f0f0] p-[1px]">
              <div className="flex flex-1 bg-[#808080]">
                <div className="ml-[414px] flex w-[1487px] flex-col items-center border-l border-r-2 border-t-2 border-black bg-white pt-[226px] font-['Liberation_Sans'] text-[43px] text-[#1c1c1c] [-webkit-text-stroke:0.5px_#1c1c1c]">
                  <div className="flex h-[55px] items-center pl-px"><T w={933}>July 2023 CSE 410 - Computer Graphics Sessional</T></div>
                  <div className="flex h-[55px] items-center pl-px"><T w={185}>Offline - 1</T></div>
                  <div className="flex h-[55px] items-center"><T w={458}>Assignment on OpenGL</T></div>
                  <div className="mt-[41px] flex h-[50px] items-center text-[29px]"><T w={507}>Deadline: 08 December 2023, 11:45 PM</T></div>
                </div>
                <div className="mt-[7px] w-[7px] bg-[#333]" />
              </div>
              <div className="w-[44px] border-l border-white pl-[7px] pt-[42px]">
                <div className="h-[25px] w-[28px] bg-[#868686]" />
              </div>
            </div>
            <div className="mr-[4px] h-[2px] shrink-0 bg-white" />
            <div className="flex flex-1 items-center pl-[27px]">
              <div className="pb-[15px]"><T w={134}>Page 1 / 4</T></div>
              <div className="ml-auto w-[56px] pt-[3px]"><ViewIcon kind="single" /></div>
              <div className="mb-[1px] flex h-[78px] w-[78px] items-center border-2 border-b-4 border-r-4 border-b-white border-l-[#777] border-r-white border-t-[#777] pl-[20px] pt-[5px]"><ViewIcon kind="continuous" /></div>
              <div className="ml-[20px] w-[77px] pt-[3px]"><ViewIcon kind="facing" /></div>
              <div className="w-[86px] pt-[3px]"><ViewIcon kind="facingContinuous" /></div>
            </div>
          </div>
        </div>
      </div>

      {/* popup menus over the table and the viewer */}
      <div className="absolute left-[1668px] top-[609px] h-[715px] w-[662px] border border-[#9c9c9c] bg-[#f9f9f9] px-[6px] pt-[6px]">
        <MenuList items={mainMenu} />
      </div>
      <div className="absolute left-[2313px] top-[959px] h-[370px] w-[552px] border border-[#9c9c9c] bg-[#f9f9f9] px-[6px] pt-[6px]">
        <MenuList items={tagMenu} wide />
        <div className="absolute -left-px top-[6px] h-[55px] w-[7px] bg-[#94cbfa]" />
      </div>
    </div>
  );
}
